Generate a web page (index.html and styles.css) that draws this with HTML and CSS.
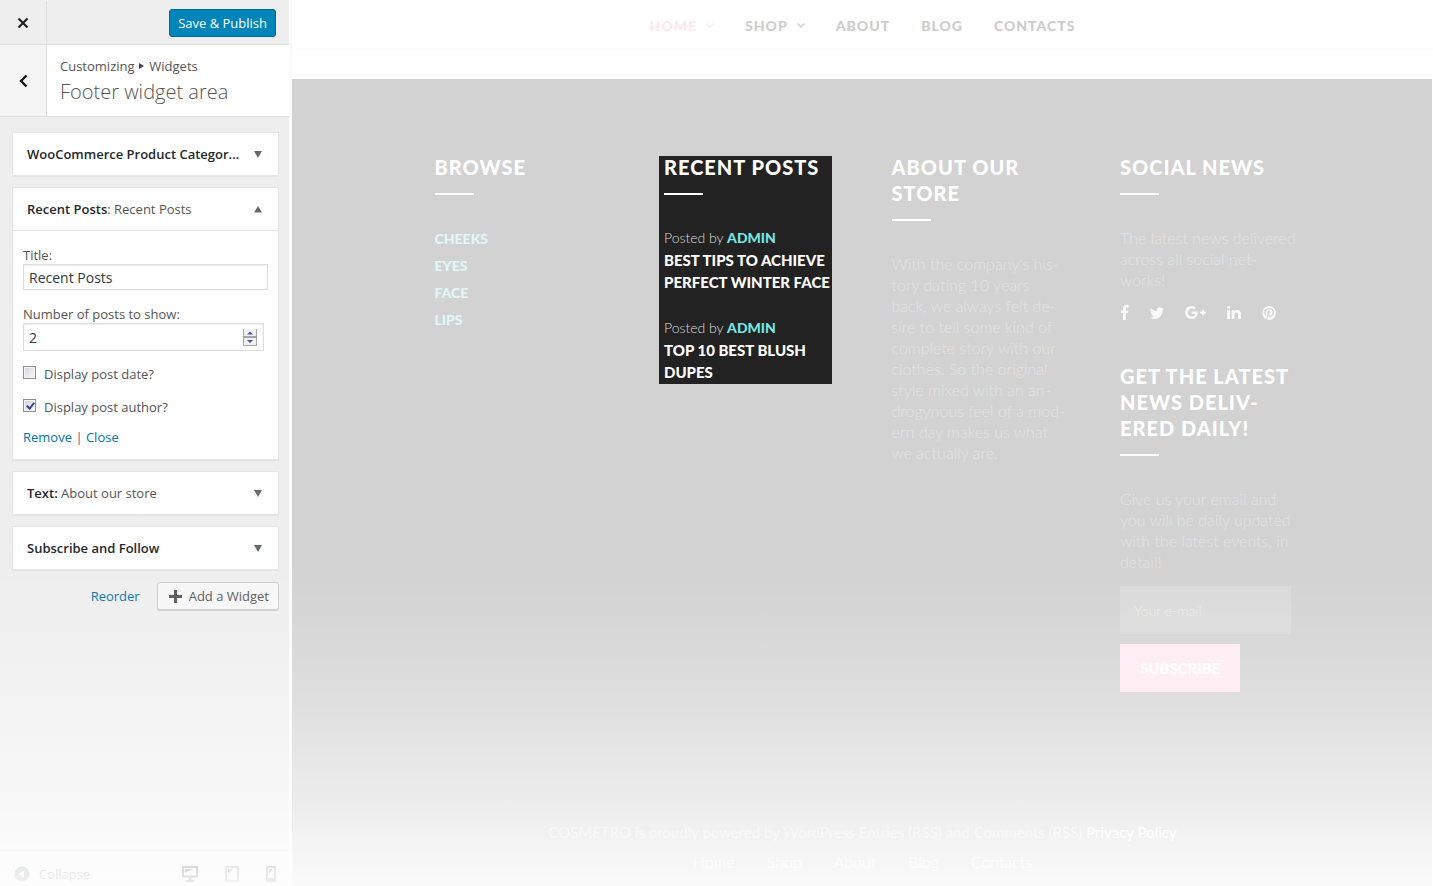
FILE: index.html
```html
<!DOCTYPE html>
<html lang="en">
<head>
<meta charset="utf-8">
<title>Customize: Footer widget area</title>
<link rel="stylesheet" href="styles.css">
</head>
<body>
<div class="app">
  <aside class="sidebar">
    <header class="bar">
      <button class="bar-close" type="button" aria-label="Close">
        <svg width="12" height="12" viewBox="0 0 12 12"><path d="M1.500 1.500l9 9M10.500 1.500l-9 9" stroke="#222" stroke-width="2.200" fill="none"/></svg>
      </button>
      <button class="save" type="button">Save &amp; Publish</button>
    </header>
    <div class="section-head">
      <button class="back" type="button" aria-label="Back">
        <svg width="9" height="14" viewBox="0 0 9 14"><path d="M7.500 1.500L2 7l5.500 5.500" stroke="#111" stroke-width="2.400" fill="none"/></svg>
      </button>
      <div class="section-title">
        <p class="crumbs">Customizing <svg width="5" height="6" viewBox="0 0 5 6"><path d="M0 0l5 3-5 3z" fill="#444"/></svg> Widgets</p>
        <h1>Footer widget area</h1>
      </div>
    </div>
    <div class="widgets">
      <section class="card">
        <h2 class="card-head"><span><b>WooCommerce Product Categor...</b></span><svg width="8" height="7" viewBox="0 0 8 7"><path d="M0 0h8L4 7z" fill="#666a70"/></svg></h2>
      </section>
      <section class="card">
        <h2 class="card-head"><span><b>Recent Posts</b>: Recent Posts</span><svg width="8" height="7" viewBox="0 0 8 7"><path d="M0 6.500h8L4 0z" fill="#666a70"/></svg></h2>
        <form class="card-body">
          <label class="lbl" for="title">Title:</label>
          <input class="text" id="title" type="text" value="Recent Posts">
          <label class="lbl lbl-next" for="count">Number of posts to show:</label>
          <div class="number">
            <input id="count" type="number" value="2">
            <svg class="spin" width="14" height="17" viewBox="0 0 14 17"><path d="M.5 0v16.500h13V0" fill="#f1f1f3" stroke="#a6a6aa"/><path d="M0 8h14" stroke="#8c8c92" stroke-width="1.500"/><path d="M4 5.500h6L7 2.500zM4 11h6l-3 3z" fill="#4257a5"/></svg>
          </div>
          <label class="check"><input type="checkbox">Display post date?</label>
          <label class="check"><input type="checkbox" checked>Display post author?</label>
          <p class="actions"><a href="#">Remove</a> <i>|</i> <a href="#">Close</a></p>
        </form>
      </section>
      <section class="card">
        <h2 class="card-head"><span><b>Text:</b> About our store</span><svg width="8" height="7" viewBox="0 0 8 7"><path d="M0 0h8L4 7z" fill="#666a70"/></svg></h2>
      </section>
      <section class="card">
        <h2 class="card-head"><span><b>Subscribe and Follow</b></span><svg width="8" height="7" viewBox="0 0 8 7"><path d="M0 0h8L4 7z" fill="#666a70"/></svg></h2>
      </section>
      <div class="tools">
        <a href="#">Reorder</a>
        <button class="add" type="button"><svg width="13" height="13" viewBox="0 0 13 13"><path d="M6.500 0v13M0 6.500h13" stroke="#555" stroke-width="3"/></svg>Add a Widget</button>
      </div>
    </div>
    <footer class="collapse-bar">
      <button class="collapse" type="button"><svg width="16" height="16" viewBox="0 0 16 16"><circle cx="8" cy="8" r="7.500" fill="#70757a"/><path d="M10 4v8L4.500 8z" fill="#fff"/></svg>Collapse</button>
      <button class="device" type="button" aria-label="Desktop"><svg width="16" height="16" viewBox="0 0 16 16"><path d="M1 1h14v9.500H1z" fill="none" stroke="#222" stroke-width="2"/><path d="M3 3h8L3 7zM6.500 11h3v3h2.500v2H4v-2h2.500z" fill="#222"/></svg></button>
      <button class="device" type="button" aria-label="Tablet"><svg width="14" height="16" viewBox="0 0 14 16"><path d="M1 1h12v14H1z" fill="none" stroke="#555" stroke-width="1.600"/><path d="M3 3h5L3 8z" fill="#555"/></svg></button>
      <button class="device" type="button" aria-label="Phone"><svg width="10" height="16" viewBox="0 0 10 16"><path d="M1 1h8v14H1z" fill="none" stroke="#555" stroke-width="1.800"/><path d="M3 3h4L3 8zM1 12h8v3H1z" fill="#555"/></svg></button>
    </footer>
  </aside>

  <main class="preview">
    <nav class="nav">
      <a class="on" href="#">HOME<svg width="8" height="5" viewBox="0 0 8 5"><path d="M.6.600L4 4 7.400.600" fill="none" stroke="currentColor" stroke-width="1.400"/></svg></a>
      <a href="#">SHOP<svg width="8" height="5" viewBox="0 0 8 5"><path d="M.6.600L4 4 7.400.600" fill="none" stroke="currentColor" stroke-width="1.400"/></svg></a>
      <a href="#">ABOUT</a>
      <a href="#">BLOG</a>
      <a href="#">CONTACTS</a>
    </nav>
    <div class="foot">
      <div class="cols">
        <section>
          <h3>BROWSE</h3>
          <ul class="cats">
            <li><a href="#">CHEEKS</a></li>
            <li><a href="#">EYES</a></li>
            <li><a href="#">FACE</a></li>
            <li><a href="#">LIPS</a></li>
          </ul>
        </section>
        <section class="focus">
          <h3>RECENT POSTS</h3>
          <article class="post">
            <p>Posted by <a href="#">ADMIN</a></p>
            <h4>BEST TIPS TO ACHIEVE<br>PERFECT WINTER FACE</h4>
          </article>
          <article class="post">
            <p>Posted by <a href="#">ADMIN</a></p>
            <h4>TOP 10 BEST BLUSH<br>DUPES</h4>
          </article>
        </section>
        <section>
          <h3>ABOUT OUR<br>STORE</h3>
          <p class="copy">With the company's his-<br>tory dating 10 years<br>back, we always felt de-<br>sire to tell some kind of<br>complete story with our<br>clothes. So the original<br>style mixed with an an-<br>drogynous feel of a mod-<br>ern day makes us what<br>we actually are.</p>
        </section>
        <section>
          <h3>SOCIAL NEWS</h3>
          <p class="copy">The latest news delivered<br>across all social net-<br>works!</p>
          <div class="social">
            <a href="#" aria-label="Facebook"><svg width="9" height="15" viewBox="0 0 9 15"><path d="M8.500.1v2.400H7.100c-1.100 0-1.300.5-1.300 1.300v1.700h2.600L8 8.100H5.800V15H3V8.100H.7V5.500H3V3.500C3 1.300 4.400 0 6.500 0c.9 0 1.800.1 2 .1z"/></svg></a>
            <a href="#" aria-label="Twitter"><svg width="14" height="12" viewBox="0 0 14 12"><path d="M14 1.400c-.4.600-.9 1.100-1.400 1.500C12.700 7.500 9.500 12 4.400 12 2.800 12 1.300 11.500 0 10.700c1.500.2 3-.3 4.200-1.200-1.300 0-2.300-.9-2.700-2 .5.100.9.100 1.300 0C1.500 7.200.5 6 .5 4.600c.4.200.8.300 1.300.4C.5 4.100.1 2.400.9 1c1.500 1.800 3.600 2.900 5.900 3C6.400 2 8 .3 9.700.3c.8 0 1.600.3 2.100.9.700-.1 1.200-.4 1.800-.7-.2.700-.7 1.200-1.200 1.600.6-.1 1.100-.3 1.600-.7z"/></svg></a>
            <a href="#" aria-label="Google Plus"><svg width="21" height="13" viewBox="0 0 21 13"><path d="M12.800 6.600c0 3.700-2.400 6.300-6.200 6.300C3 12.900.2 10.100.2 6.500S3 .1 6.600.1c1.700 0 3.100.6 4.200 1.600L9 3.400c-.5-.4-1.200-1-2.400-1-2.200 0-3.900 1.800-3.900 4.100s1.700 4.100 3.900 4.100c2.500 0 3.400-1.800 3.600-2.700H6.600V5.500h6.100c0 .3.100.7.100 1.100zM20.800 5.600v1.800h-1.900v1.900h-1.800V7.400h-1.900V5.600h1.900V3.700h1.800v1.900z"/></svg></a>
            <a href="#" aria-label="LinkedIn"><svg width="14" height="13" viewBox="0 0 14 13"><path d="M.2 4.200H3V13H.2zM1.600 0c1 0 1.600.6 1.600 1.500S2.500 3 1.600 3 0 2.300 0 1.500.6 0 1.600 0zM4.600 4.200h2.800v1.300C7.800 4.900 8.500 4 10.200 4 12.300 4 14 5.300 14 8.100V13h-2.900V8.400c0-1.200-.4-2-1.500-2-1.300 0-2.100.9-2.100 2V13H4.600z"/></svg></a>
            <a href="#" aria-label="Pinterest"><svg width="14" height="14" viewBox="0 0 14 14"><path d="M7 0a7 7 0 0 1 0 14c-.7 0-1.400-.1-2-.3.300-.5.700-1.200.8-1.800l.5-2c.3.500 1 .9 1.800.9 2.300 0 3.900-2.100 3.900-4.700C12 3.800 10.200 2 7.400 2 4 2 2.200 4.200 2.200 6.500c0 1.100.6 2.400 1.500 2.900.4.100.5-1 .3-1.300C2.900 6.200 4.400 3.300 7.200 3.300c2.100 0 3.300 1.300 3.300 3 0 1.900-1 3.300-2.300 3.300-.8 0-1.300-.6-1.100-1.400.3-.9.700-1.900.7-2.500 0-1.600-2.400-1.400-2.400.8 0 .6.200 1.100.2 1.100l-1 4.300-.3 1.300A7 7 0 0 1 7 0z"/></svg></a>
          </div>
          <h3>GET THE LATEST<br>NEWS DELIV-<br>ERED DAILY!</h3>
          <p class="copy">Give us your email and<br>you will be daily updated<br>with the latest events, in<br>detail!</p>
          <form class="subscribe">
            <input type="email" placeholder="Your e-mail" aria-label="Your e-mail">
            <button type="button">SUBSCRIBE</button>
          </form>
        </section>
      </div>
      <div class="legal">
        <p>COSMETRO is proudly powered by WordPress Entries (RSS) and Comments (RSS) <a href="#">Privacy Policy</a></p>
        <nav class="legal-nav"><a href="#">Home</a><a href="#">Shop</a><a href="#">About</a><a href="#">Blog</a><a href="#">Contacts</a></nav>
      </div>
    </div>
  </main>
  <div class="fade"></div>
</div>
</body>
</html>
```
FILE: styles.css
```css
* { box-sizing: border-box; }
body { margin: 0; background: #fff; font-family: "Open Sans", sans-serif; font-size: 13px; color: #555; }
h1, h2, h3, h4, p, ul { margin: 0; padding: 0; font-weight: 400; }
button { font: inherit; border: 0; background: none; padding: 0; cursor: pointer; }
a { text-decoration: none; color: #0073aa; }
svg { flex: none; }

.app { position: relative; display: grid; grid-template-columns: 292px 1fr; min-height: 100vh; }
.fade { position: absolute; left: 0; right: 0; bottom: 0; height: 320px; pointer-events: none;
  background: linear-gradient(rgba(255,255,255,0), rgba(255,255,255,.28) 42%, rgba(255,255,255,.62) 76%, rgba(255,255,255,.9)); }

/* Customizer panel */
.sidebar { display: flex; flex-direction: column; background: #eee; border-right: 3px solid #fbfbfb; }
.bar { display: flex; align-items: center; justify-content: space-between; height: 45px; padding: 1px 13px 0 0; border-bottom: 1px solid #ddd; }
.bar-close, .back { display: flex; align-items: center; justify-content: center; width: 47px; border-right: 1px solid #ddd; align-self: stretch; }
.save { height: 28px; padding: 0 8px; border: 1px solid #006799; border-radius: 3px; background: #0085ba; color: #fff; }
.section-head { display: flex; height: 72px; background: #fff; border-bottom: 1px solid #ddd; }
.back { background: #f5f5f5; }
.section-title { padding: 11px 0 0 13px; }
.crumbs { line-height: 20px; }
.crumbs svg { margin: 0 2px 2px 1px; }
h1 { font-size: 20px; font-weight: 300; line-height: 32px; }

.widgets { flex: 1; display: flex; flex-direction: column; gap: 11px; padding: 15px 10px 0 12px; }
.card { background: #fff; border: 1px solid #e5e5e5; box-shadow: 0 1px 1px rgba(0,0,0,.04); }
.card-head { display: flex; align-items: center; justify-content: space-between; height: 42px; padding: 0 16px 0 14px; font-size: 13px; }
.card-head b { font-weight: 600; color: #23282d; }
.card-body { display: flex; flex-direction: column; padding: 15px 10px 12px; border-top: 1px solid #e5e5e5; }
.lbl { line-height: 18px; }
.lbl-next { margin-top: 15px; }
.text, .number { border: 1px solid #ddd; background: #fff; box-shadow: inset 0 1px 2px rgba(0,0,0,.07); }
.text, .number input { font: 14px "Open Sans", sans-serif; color: #32373c; }
.text { height: 26px; padding: 0 5px; }
.number { display: flex; align-items: center; height: 28px; margin-right: 4px; padding: 0 6px 0 5px; }
.number input { flex: 1; min-width: 0; border: 0; padding: 0; background: none; appearance: textfield; }
.number input::-webkit-inner-spin-button { appearance: none; }
.check { display: flex; align-items: center; gap: 8px; height: 33px; }
.number + .check { margin-top: 6px; }
.check input { position: relative; appearance: none; width: 13px; height: 13px; margin: 0 0 2px; border: 1px solid #8e8f8f; background: linear-gradient(135deg, #d2d5d9, #fafafa); box-shadow: inset 0 0 0 1px #f4f4f4; }
.check input:checked::before { content: ""; position: absolute; left: 4px; top: 1px; width: 3px; height: 6px; border: solid #34478f; border-width: 0 2px 2px 0; transform: rotate(40deg); }
.actions { margin-top: 4px; line-height: 20px; }
.actions i { color: #824a8a; font-style: normal; }
.tools { display: flex; align-items: center; justify-content: flex-end; gap: 17px; margin-top: 1px; }
.add { display: flex; align-items: center; gap: 7px; height: 28px; padding: 0 9px 0 11px; border: 1px solid #ccc; border-radius: 3px; background: #f7f7f7; box-shadow: 0 1px 0 #ccc; color: #555; }

.collapse-bar { display: flex; align-items: center; height: 36px; padding: 10px 13px 0 14px; border-top: 1px solid #ddd; background: #f1f1f1; }
.collapse { display: flex; align-items: center; gap: 9px; margin-right: auto; color: #555; }
.device { display: flex; margin-left: 27px; }

/* Shop preview */
.preview { display: flex; flex-direction: column; font-family: Lato, sans-serif; }
.nav { display: flex; justify-content: center; align-items: center; gap: 31px; height: 48px; margin-bottom: 31px; padding-top: 2px; box-shadow: 0 1px 6px rgba(0,0,0,.03); }
.nav a { display: flex; align-items: center; gap: 9px; font-size: 14px; font-weight: 900; letter-spacing: 1px; color: #ccc; }
.nav .on { color: #ffe6ef; }
.foot { flex: 1; display: flex; flex-direction: column; margin-right: 1px; padding: 75px 16px 10px 17px; background: #d2d2d2; }
.cols { display: grid; grid-template-columns: repeat(4, minmax(0, 1fr)); gap: 58px; width: 100%; max-width: 856px; margin: 0 auto; align-items: start; }
h3 { font-size: 20px; font-weight: 900; line-height: 26px; letter-spacing: 1px; color: #fff; white-space: nowrap; }
h3::after { content: ""; display: block; width: 39px; height: 2px; margin: 13px 0 32px; background: #fff; }
.cats { list-style: none; font-size: 14px; font-weight: 900; line-height: 27px; margin-top: -2px; }
.cats a { color: #e1f8f8; }
.focus { margin: 2px 2px 0 -4px; padding: 0 0 1px 5px; background: #222; white-space: nowrap; }
.focus h3 { margin-top: -2px; }
.post { line-height: 22px; font-size: 14px; }
.post + .post { margin-top: 24px; }
.post p { color: #ddd; font-weight: 300; }
.post a { color: #76e5e3; font-weight: 900; }
.post h4 { color: #fff; font-weight: 900; font-size: 15px; }
.copy { font-size: 16px; font-weight: 300; line-height: 21px; color: #e3e3e3; white-space: nowrap; }
.social { display: flex; align-items: center; gap: 21px; height: 15px; margin: 15px 0 43px; }
.social svg { display: block; fill: #fafafa; }
.subscribe { display: flex; flex-direction: column; align-items: flex-start; gap: 10px; margin-top: 14px; }
.subscribe input { width: 100%; height: 48px; padding: 0 14px; border: 0; background: #d9d9d9; font: 300 14px Lato, sans-serif; }
.subscribe input::placeholder { color: #ececec; opacity: 1; }
.subscribe button { height: 48px; padding: 0 20px; background: #ffeaf2; color: #fff; font-size: 15px; font-weight: 900; }
.legal { margin-top: auto; text-align: center; font-size: 15px; font-weight: 300; line-height: 29px; color: #e8e8e8; }
.legal a { color: #fff; }
.legal-nav { display: flex; justify-content: center; gap: 32px; font-size: 16px; }
```
